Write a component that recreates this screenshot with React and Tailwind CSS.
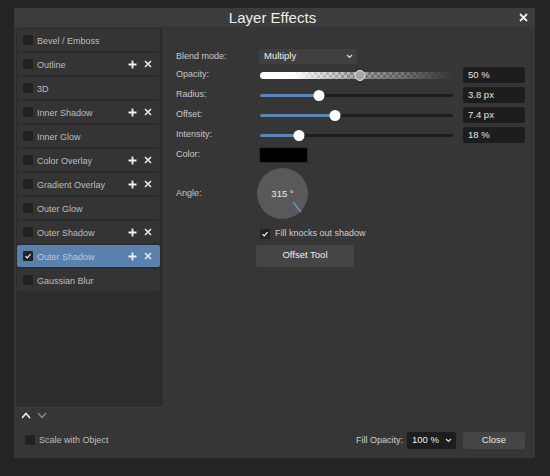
import React from "react";

const items = [
  { name: "Bevel / Emboss" },
  { name: "Outline", pm: true },
  { name: "3D" },
  { name: "Inner Shadow", pm: true },
  { name: "Inner Glow" },
  { name: "Color Overlay", pm: true },
  { name: "Gradient Overlay", pm: true },
  { name: "Outer Glow" },
  { name: "Outer Shadow", pm: true },
  { name: "Outer Shadow", pm: true, sel: true, checked: true },
  { name: "Gaussian Blur" },
];

function Plus() {
  return (
    <svg width="9" height="9" viewBox="0 0 9 9">
      <path d="M4.5 0.5v8M0.5 4.5h8" stroke="#f0f0f0" strokeWidth="1.8" />
    </svg>
  );
}
function Cross() {
  return (
    <svg width="8" height="8" viewBox="0 0 8 8">
      <path d="M1 1l6 6M7 1l-6 6" stroke="#e8e8e8" strokeWidth="1.6" />
    </svg>
  );
}
function Check() {
  return (
    <svg width="8" height="8" viewBox="0 0 8 8">
      <path d="M1.5 4.3l1.8 1.7 3.3-3.8" stroke="#f0f0f0" strokeWidth="1.2" fill="none" />
    </svg>
  );
}
function Chevron() {
  return (
    <svg width="7" height="5" viewBox="0 0 7 5">
      <path d="M1 1l2.5 2.5L6 1" stroke="#ddd" strokeWidth="1.2" fill="none" />
    </svg>
  );
}

function Slider({ pos }) {
  return (
    <div className="relative h-[10px] w-[193px] flex items-center">
      <div className="h-[3px] w-full rounded-full bg-[#1d1d1d]" />
      <div
        className="absolute left-0 h-[3px] rounded-full bg-[#5c86b8]"
        style={{ width: pos }}
      />
      <div
        className="absolute h-[11px] w-[11px] rounded-full bg-white -translate-x-1/2"
        style={{ left: pos }}
      />
    </div>
  );
}

function ValueBox({ v }) {
  return (
    <div className="h-[16px] w-[62px] rounded-[2px] bg-[#1d1d1d] pl-[5px] text-[9.5px] leading-[16px] text-[#e4e4e4]">
      {v}
    </div>
  );
}

export default function App() {
  return (
    <div
      className="h-[476px] w-[550px] bg-[#242424] pt-[8px] pl-[14px] text-[#c8c8c8]"
      style={{ fontFamily: '"Liberation Sans", Arial, sans-serif' }}
    >
      <div className="flex h-[450px] w-[521px] flex-col bg-[#363636]">
        {/* header */}
        <div className="relative flex h-[19px] items-center justify-center bg-[#3c3c3c] pr-[4px]">
          <span className="text-[15px] leading-none text-[#ececec]">Layer Effects</span>
          <div className="absolute right-[7px] top-[5px]">
            <svg width="9" height="9" viewBox="0 0 9 9">
              <path d="M1 1l7 7M8 1l-7 7" stroke="#f2f2f2" strokeWidth="1.8" />
            </svg>
          </div>
        </div>

        <div className="flex flex-1">
          {/* left column */}
          <div className="flex w-[149px] flex-col pl-[2px] pt-[1px]">
            <div className="flex h-[378px] w-[146px] flex-col gap-[2px] border-r border-b border-[#272727] bg-[#2d2d2d] pt-[1px]">
              {items.map((it, i) => (
                <div
                  key={i}
                  className={
                    "mx-[1px] flex h-[22px] items-center rounded-[2px] pl-[6px] pr-[8px] " +
                    (it.sel ? "bg-[#5a80ad]" : "bg-[#343434]")
                  }
                >
                  <div className="flex h-[10px] w-[10px] items-center justify-center rounded-[1px] bg-[#222]">
                    {it.checked && <Check />}
                  </div>
                  <span
                    className={
                      "ml-[4px] mt-[2px] flex-1 text-[9px] leading-[10px] " +
                      (it.sel ? "text-[#b9c9dc]" : "text-[#bdbdbd]")
                    }
                  >
                    {it.name}
                  </span>
                  {it.pm && (
                    <div className="flex items-center gap-[7px]">
                      <Plus />
                      <Cross />
                    </div>
                  )}
                </div>
              ))}
            </div>
            <div className="mt-[6px] flex items-center gap-[6px] pl-[5px]">
              <svg width="10" height="7" viewBox="0 0 10 7">
                <path d="M1 6l4-4.5L9 6" stroke="#f0f0f0" strokeWidth="1.6" fill="none" />
              </svg>
              <svg width="10" height="7" viewBox="0 0 10 7">
                <path d="M1 1l4 4.5L9 1" stroke="#8a8a8a" strokeWidth="1.3" fill="none" />
              </svg>
            </div>
            <div className="mt-[14px] flex items-center pl-[9px]">
              <div className="h-[10px] w-[10px] rounded-[1px] bg-[#222]" />
              <span className="ml-[4px] mt-[1px] text-[9px] text-[#bdbdbd]">Scale with Object</span>
            </div>
          </div>

          {/* right column */}
          <div className="flex flex-1 flex-col pl-[13px] pt-[22px] text-[9px]">
            <div className="flex h-[15px] items-center">
              <span className="w-[83px]">Blend mode:</span>
              <div className="flex h-[15px] w-[98px] items-center justify-between rounded-[2px] bg-[#404040] pl-[5px] pr-[4px]">
                <span className="text-[9.5px] text-[#ececec]">Multiply</span>
                <Chevron />
              </div>
            </div>

            <div className="mt-[1px] flex h-[20px] items-center">
              <span className="w-[84px]">Opacity:</span>
              <div className="relative flex h-[10px] w-[193px] items-center">
                <div
                  className="h-[7px] w-full rounded-full"
                  style={{
                    background:
                      "linear-gradient(90deg, #ffffff 0%, #ffffff 17%, rgba(255,255,255,0.5) 30%, rgba(255,255,255,0) 50%), linear-gradient(90deg, rgba(54,54,54,0) 30%, rgba(54,54,54,0.5) 70%, #363636 100%), repeating-conic-gradient(#c8c8c8 0% 25%, #8e8e8e 0% 50%) 0 0 / 6px 6px",
                  }}
                />
                <div className="absolute left-[100px] h-[11px] w-[11px] -translate-x-1/2 rounded-full border-[1.5px] border-[#e8e8e8] bg-[#a6a6a6]" />
              </div>
              <div className="ml-[10px]">
                <ValueBox v="50 %" />
              </div>
            </div>

            <div className="flex h-[20px] items-center">
              <span className="w-[84px]">Radius:</span>
              <Slider pos={59} />
              <div className="ml-[10px]"><ValueBox v="3.8 px" /></div>
            </div>
            <div className="flex h-[20px] items-center">
              <span className="w-[84px]">Offset:</span>
              <Slider pos={75} />
              <div className="ml-[10px]"><ValueBox v="7.4 px" /></div>
            </div>
            <div className="flex h-[20px] items-center">
              <span className="w-[84px]">Intensity:</span>
              <Slider pos={39} />
              <div className="ml-[10px]"><ValueBox v="18 %" /></div>
            </div>

            <div className="mt-[2px] flex h-[16px] items-center">
              <span className="w-[83px]">Color:</span>
              <div className="h-[16px] w-[49px] rounded-[2px] border border-[#2a2a2a] bg-black" />
            </div>

            <div className="mt-[5px] flex items-center">
              <span className="w-[81px]">Angle:</span>
              <div className="relative h-[51px] w-[51px] rounded-full bg-[#595959]">
                <span className="absolute left-0 right-0 top-[19px] text-center text-[9.5px] text-[#ececec]">
                  315 °
                </span>
                <svg className="absolute left-0 top-0" width="51" height="51" viewBox="0 0 51 51">
                  <path d="M36 34l8 10" stroke="#6b9ad0" strokeWidth="1.3" />
                </svg>
              </div>
            </div>

            <div className="mt-[8px] flex items-center pl-[84px]">
              <div className="flex h-[10px] w-[10px] items-center justify-center rounded-[1px] bg-[#222]">
                <Check />
              </div>
              <span className="ml-[5px] text-[#cfcfcf]">Fill knocks out shadow</span>
            </div>

            <div className="mt-[4px] pl-[80px]">
              <div className="flex h-[22px] w-[98px] items-center justify-center rounded-[2px] bg-[#454545] text-[9.5px] text-[#f0f0f0]">
                Offset Tool
              </div>
            </div>

            <div className="flex-1" />
            <div className="mb-[9px] flex items-center justify-end pr-[10px]">
              <span className="text-[#cfcfcf]">Fill Opacity:</span>
              <div className="ml-[4px] flex h-[17px] w-[49px] items-center justify-between rounded-[2px] bg-[#1d1d1d] pl-[5px] pr-[4px]">
                <span className="text-[9.5px] text-[#ececec]">100 %</span>
                <Chevron />
              </div>
              <div className="ml-[7px] flex h-[17px] w-[62px] items-center justify-center rounded-[2px] bg-[#454545] text-[9.5px] text-[#e8e8e8]">
                Close
              </div>
            </div>
          </div>
        </div>
      </div>
    </div>
  );
}
